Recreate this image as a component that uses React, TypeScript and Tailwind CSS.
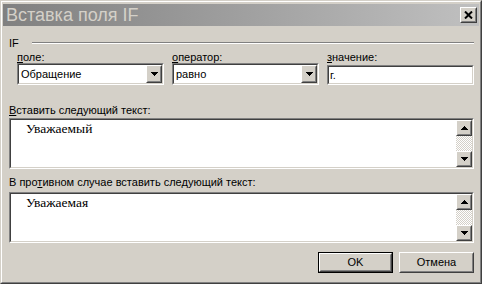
import React from 'react';

const sans = "font-['Liberation_Sans',Arial,sans-serif]";

function Raised({ className = '', children }: { className?: string; children?: React.ReactNode }) {
    return (
        <div className={`border border-t-white border-l-white border-r-[#404040] border-b-[#404040] bg-[#d4d0c8] ${className}`}>
            <div className="flex h-full w-full items-center justify-center border border-t-[#d4d0c8] border-l-[#d4d0c8] border-r-[#808080] border-b-[#808080]">
                {children}
            </div>
        </div>
    );
}

function Sunken({ className = '', children }: { className?: string; children?: React.ReactNode }) {
    return (
        <div className={`border border-t-[#808080] border-l-[#808080] border-r-white border-b-white ${className}`}>
            <div className="h-full border border-t-[#404040] border-l-[#404040] border-r-[#d4d0c8] border-b-[#d4d0c8] bg-white">
                {children}
            </div>
        </div>
    );
}

function Arrow({ up = false }: { up?: boolean }) {
    return (
        <svg width="7" height="4" viewBox="0 0 7 4" shapeRendering="crispEdges">
            {up ? <polygon points="3.5,0 7,4 0,4" fill="#000" /> : <polygon points="0,0 7,0 3.5,4" fill="#000" />}
        </svg>
    );
}

function Combo({ value }: { value: string }) {
    return (
        <Sunken className="h-[22px]">
            <div className="flex h-full">
                <div className="flex flex-1 items-center pl-[2px] text-[11px] leading-[13px]">{value}</div>
                <Raised className="h-full w-[16px]">
                    <Arrow />
                </Raised>
            </div>
        </Sunken>
    );
}

function TextBox({ text }: { text: string }) {
    return (
        <Sunken className="h-[51px]">
            <div className="flex h-full">
                <div className="flex-1 pl-[15px] pt-[1px] font-['Liberation_Serif','Times_New_Roman',serif] text-[13.5px] leading-[15px]">
                    {text}
                </div>
                <div className="flex w-[16px] flex-col">
                    <Raised className="h-[16px]">
                        <Arrow up />
                    </Raised>
                    <div className="flex-1 bg-[repeating-conic-gradient(#ffffff_0%_25%,#d4d0c8_0%_50%)] bg-[length:2px_2px]" />
                    <Raised className="h-[16px]">
                        <Arrow />
                    </Raised>
                </div>
            </div>
        </Sunken>
    );
}

export default function App(): React.ReactElement {
    return (
        <div className={`h-[284px] w-[482px] border border-t-[#d4d0c8] border-l-[#d4d0c8] border-r-[#404040] border-b-[#404040] text-black ${sans}`}>
            <div className="h-full border border-t-white border-l-white border-r-[#808080] border-b-[#808080] bg-[#d4d0c8] px-[1px] pt-[2px]">
                {/* Title bar */}
                <div className="flex h-[22px] items-center bg-linear-to-r from-[#808080] to-[#c0c0c0] pl-[3px] pr-[2px]">
                    <div className="flex-1 text-[18px] leading-[22px] text-[#d4d0c8]">Вставка поля IF</div>
                    <Raised className="h-[16px] w-[17px]">
                        <svg width="9" height="8" viewBox="0 0 9 8">
                            <path d="M1 0.5 L8 7.5 M8 0.5 L1 7.5" stroke="#000" strokeWidth="2" />
                        </svg>
                    </Raised>
                </div>

                <div className="flex flex-col pl-[6px] pr-[5px] text-[11px]">
                    {/* IF group */}
                    <div className="mt-[11px] flex h-[13px] items-start leading-[13px]">
                        <span>IF</span>
                        <div className="ml-[13px] mt-[5px] h-[2px] flex-1 border-t border-b border-t-[#808080] border-b-white" />
                    </div>

                    <div className="mt-[1px] grid grid-cols-3 gap-x-[8px] pl-[8px]">
                        <div className="flex flex-col">
                            <div className="h-[12px] leading-[12px]"><span className="underline">п</span>оле:</div>
                            <Combo value="Обращение" />
                        </div>
                        <div className="flex flex-col">
                            <div className="h-[12px] leading-[12px]"><span className="underline">о</span>ператор:</div>
                            <Combo value="равно" />
                        </div>
                        <div className="flex flex-col">
                            <div className="h-[12px] leading-[12px]"><span className="underline">з</span>начение:</div>
                            <Sunken className="mt-[2px] h-[20px]">
                                <div className="flex h-full items-center pl-[1px] leading-[13px]">г.</div>
                            </Sunken>
                        </div>
                    </div>

                    <div className="mt-[19px] h-[13px] leading-[13px]"><span className="underline">В</span>ставить следующий текст:</div>
                    <div className="mt-[1px]">
                        <TextBox text="Уважаемый" />
                    </div>

                    <div className="mt-[7px] h-[13px] leading-[13px]">В про<span className="underline">т</span>ивном случае вставить следующий текст:</div>
                    <div className="mt-[3px]">
                        <TextBox text="Уважаемая" />
                    </div>

                    <div className="mt-[9px] flex justify-end gap-[6px]">
                        <div className="h-[21px] w-[75px] border border-black">
                            <Raised className="h-full w-full">
                                <span className="leading-[13px]">OK</span>
                            </Raised>
                        </div>
                        <Raised className="h-[21px] w-[75px]">
                            <span className="leading-[13px]">Отмена</span>
                        </Raised>
                    </div>
                </div>
            </div>
        </div>
    );
}
